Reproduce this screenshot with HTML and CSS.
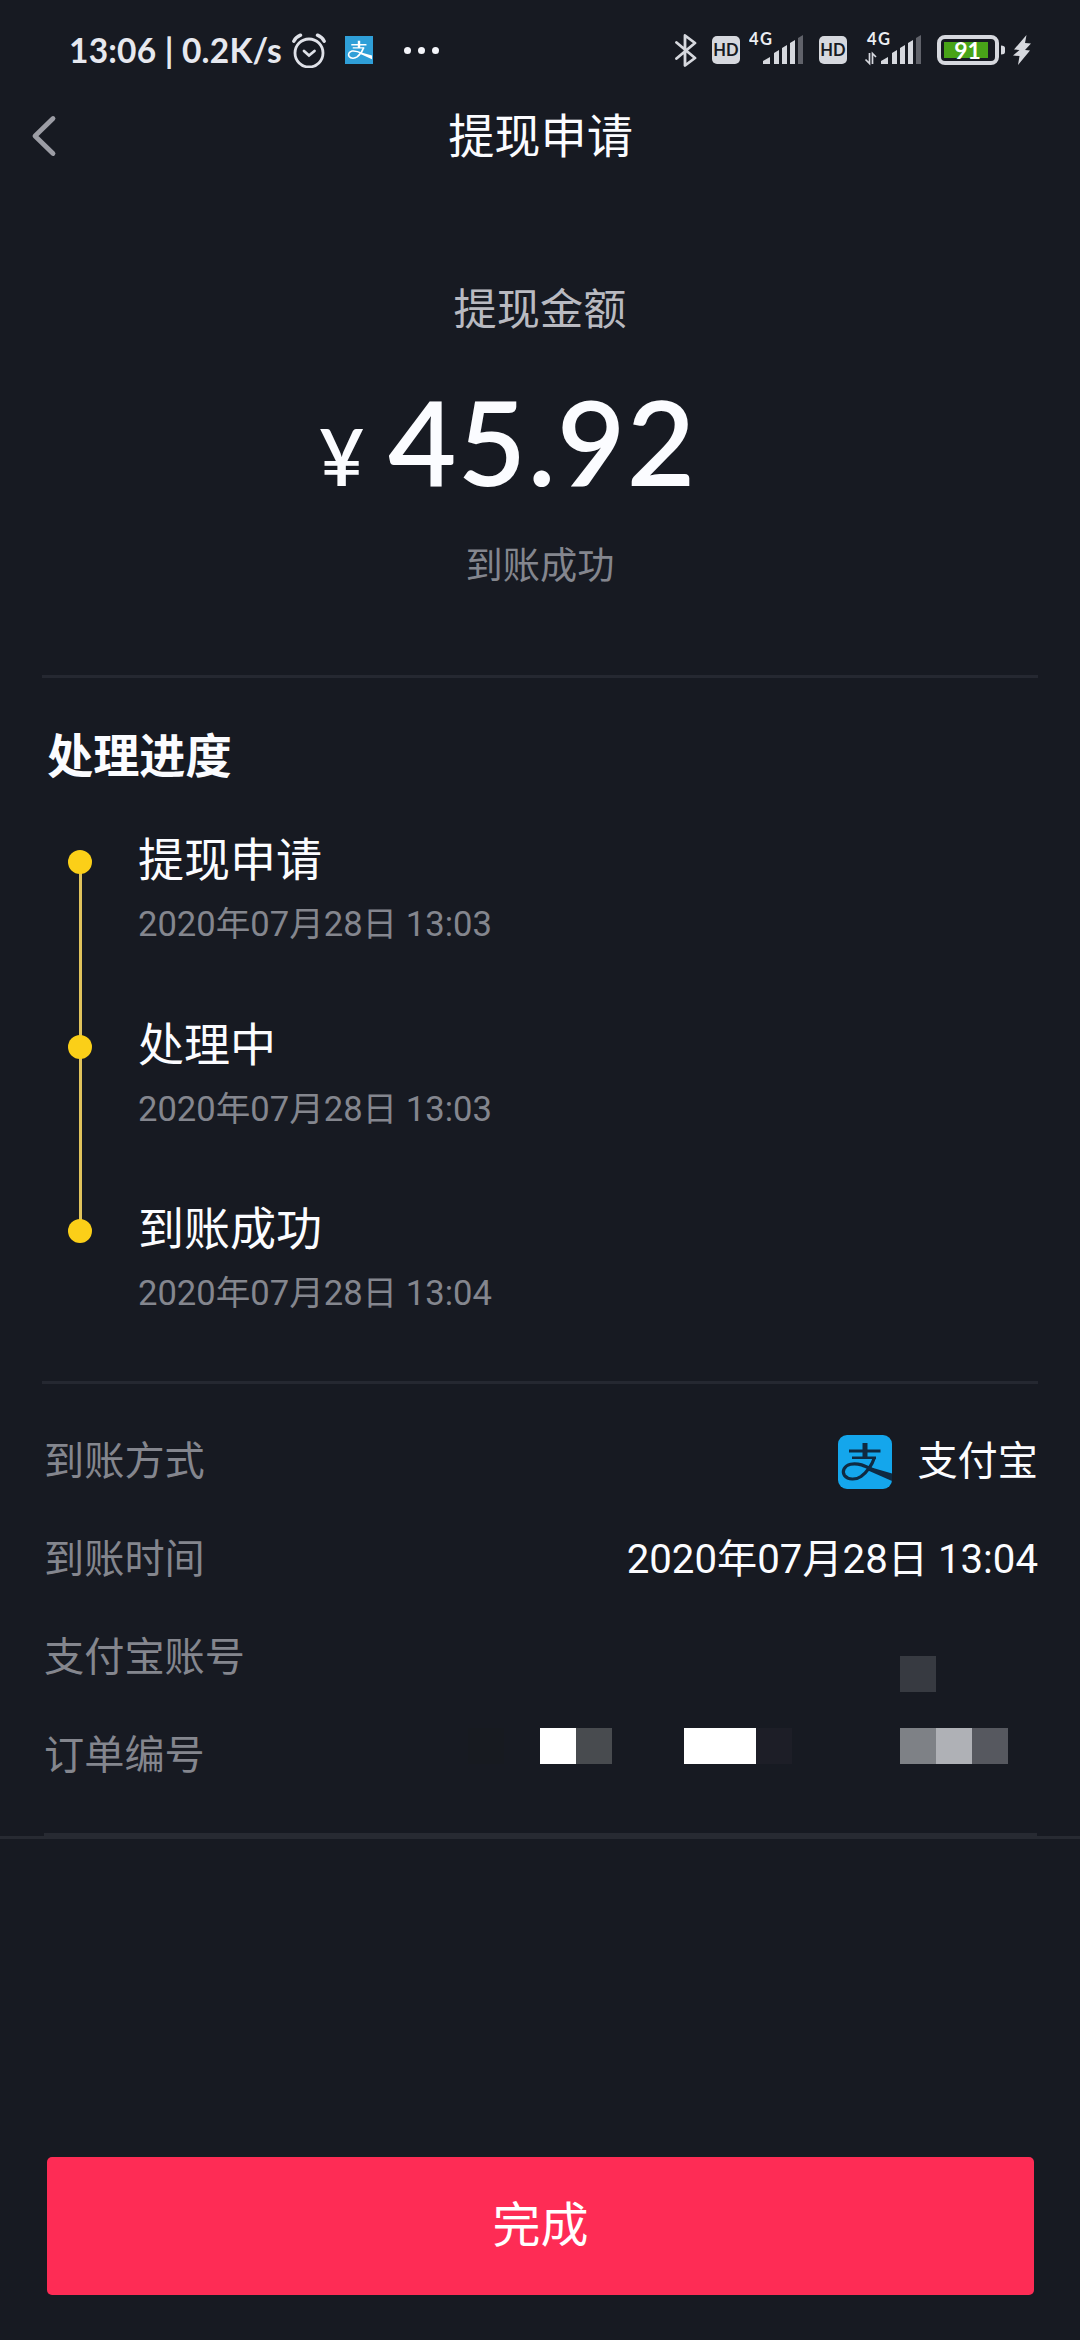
FILE: index.html
```html
<!DOCTYPE html>
<html lang="zh-CN">
<head>
<meta charset="utf-8">
<title>提现申请</title>
<link rel="stylesheet" href="styles.css">
</head>
<body>
<div class="screen">
  <svg class="defs" width="0" height="0">
    <defs>
      <symbol id="zhi" viewBox="0 0 54 54">
        <path d="M11 14.500h31.500v3H11zM24.500 8h5v16h-5zM14 21.500h24V24H14z" fill="currentColor"/>
        <path d="M36.500 22.500C34 30 29 37 23 41.500c-5 3.500-13 3.500-16.500-1-3-4.500 0-10 6-11.300C21 27.500 28 31.500 35 35" fill="none" stroke="currentColor" stroke-width="3.200"/>
        <path d="M30 31.500l24 7v7.500L29 35z" fill="currentColor"/>
      </symbol>
    </defs>
  </svg>

  <header class="status">
    <span class="clock">13:06 | 0.2K/s</span>
    <svg class="alarm" width="34" height="35" viewBox="0 0 34 35" fill="none" stroke="#dfe1e8" stroke-linecap="round">
      <circle cx="17" cy="20" r="14" stroke-width="2.800"/>
      <path d="M1.800 8.200Q4 4 8.500 2.200M32.200 8.200Q30 4 25.500 2.200" stroke-width="3.400"/>
      <path d="M12 18l5 4.500 5.500-4.500" stroke-width="2.800"/>
    </svg>
    <span class="app"><svg width="26" height="26"><use href="#zhi"/></svg></span>
    <span class="more"><i></i><i></i><i></i></span>
    <span class="grow"></span>
    <svg class="bt" width="22" height="35" viewBox="0 0 22 35" fill="none" stroke="#d6d8de" stroke-width="2.800" stroke-linejoin="round" stroke-linecap="round">
      <path d="M1.500 9.500L20 25 10 32.500V2.500L20 10 1.500 25.500"/>
    </svg>
    <span class="hd">HD</span>
    <svg class="sig1" width="54" height="44" viewBox="0 -5 54 44">
      <text x="0" y="12" class="net" textLength="23">4G</text>
      <path d="M14 31v-3l7-4v7zM25 31V20l5-3v14zM33 31V15l5-3v19zM41 31V10l5-3v24z" fill="#d6d8de"/>
      <path d="M49 31V5l5-3v29z" fill="#60626a"/>
    </svg>
    <span class="hd hd2">HD</span>
    <svg class="sig2" width="57" height="44" viewBox="-3 -5 57 44">
      <text x="0" y="12" class="net" textLength="23">4G</text>
      <path d="M2.500 20v10.500L-1.500 26.500M5.500 31V20.500L9 24" fill="none" stroke="#d6d8de" stroke-width="1.700"/>
      <path d="M14 31v-3l7-4v7zM25 31V20l5-3v14zM33 31V15l5-3v19zM41 31V10l5-3v24z" fill="#d6d8de"/>
      <path d="M49 31V5l5-3v29z" fill="#60626a"/>
    </svg>
    <svg class="bat" width="69" height="30" viewBox="0 0 69 30">
      <rect x="2" y="2" width="58" height="26" rx="6" fill="none" stroke="#d6d8de" stroke-width="4"/>
      <rect x="7" y="7" width="44" height="16" fill="#48a318"/>
      <path d="M64 10.500q4 0 4 2.500v4q0 2.500-4 2.500z" fill="#d6d8de"/>
      <text x="30.500" y="23.500" class="pct" text-anchor="middle">91</text>
    </svg>
    <svg class="bolt" width="18" height="30" viewBox="0 0 18 30">
      <path d="M13.500 0L1 14.500l5.500.5L0 20.500l6.500.5L5 30 17 15.500l-5-.5 6-6.500-6-.5z" fill="#d6d8de"/>
    </svg>
  </header>

  <nav class="bar">
    <svg class="back" width="26" height="42" viewBox="0 0 26 42"><path d="M22 3.500L4 21l18 17.500" fill="none" stroke="#9c9da5" stroke-width="4.800" stroke-linecap="round" stroke-linejoin="round"/></svg>
    <h1>提现申请</h1>
  </nav>

  <section class="summary">
    <p class="label">提现金额</p>
    <p class="amount"><span class="yen">¥</span><span class="num">45.92</span></p>
    <p class="state">到账成功</p>
  </section>

  <section class="progress">
    <h2>处理进度</h2>
    <ol>
      <li><b>提现申请</b><time>2020年07月28日 13:03</time></li>
      <li><b>处理中</b><time>2020年07月28日 13:03</time></li>
      <li><b>到账成功</b><time>2020年07月28日 13:04</time></li>
    </ol>
  </section>

  <section class="details">
    <div class="row"><span>到账方式</span><span class="val"><span class="alipay"><svg width="54" height="54"><use href="#zhi"/></svg></span>支付宝</span></div>
    <div class="row"><span>到账时间</span><span class="val">2020年07月28日 13:04</span></div>
    <div class="row"><span>支付宝账号</span><span class="mosaic account"><i class="m1"></i></span></div>
    <div class="row"><span>订单编号</span><span class="mosaic order"><i class="m0"></i><i></i><i class="m3"></i><i class="m2"></i><i></i><i></i><i class="m3"></i><i class="m3"></i><i class="m4"></i><i></i><i></i><i></i><i class="m5"></i><i class="m6"></i><i class="m7"></i></span></div>
  </section>
  <div class="end"><div></div></div>

  <button class="done">完成</button>
</div>
</body>
</html>
```

FILE: styles.css
```css
* { box-sizing: border-box; margin: 0; padding: 0; }

body {
  background: #171a22;
  color: #fbfcff;
  font-family: Roboto, "Noto Sans CJK SC", sans-serif;
}

.screen {
  width: 1080px;
  height: 2340px;
  display: flex;
  flex-direction: column;
  overflow: hidden;
}

.defs { position: absolute; }
svg { display: block; flex: none; }

/* status bar */
.status {
  height: 100px;
  flex: none;
  display: flex;
  align-items: center;
  padding: 0 49px 0 69px;
}
.clock {
  width: 223px;
  font: 700 33.500px/40px Lato, sans-serif;
  letter-spacing: 0.200px;
  color: #e6e8ef;
  white-space: pre;
}
.app {
  width: 28px;
  height: 28px;
  margin-left: 19px;
  padding: 1px;
  background: #2f9fd8;
  color: #fff;
}
.more { display: flex; gap: 7px; margin-left: 31px; }
.more i { width: 7px; height: 7px; border-radius: 50%; background: #f4f5fa; }
.grow { flex: 1; }
.hd {
  width: 28px;
  height: 28px;
  margin-left: 15px;
  border-radius: 5px;
  background: #d6d8de;
  color: #171a22;
  font: 700 16.500px/29px Lato, sans-serif;
  text-align: center;
}
.hd2 { margin-left: 16px; }
.sig1 { margin-left: 9px; }
.sig2 { margin-left: 17px; }
.net { font: 700 16.500px Lato, sans-serif; fill: #eceef3; }
.bat { margin-left: 16px; }
.pct { font: 700 23px Lato, sans-serif; fill: #fff; }
.bolt { margin-left: 7px; }

/* title bar */
.bar {
  height: 72px;
  flex: none;
  display: grid;
  grid-template-columns: 80px 1fr 80px;
  align-items: center;
}
.back { margin-left: 31px; }
.bar h1 { padding: 2px 0 0 1px; font-size: 46.200px; line-height: 60px; font-weight: 400; text-align: center; }

/* amount */
.summary {
  height: 503px;
  flex: none;
  padding-top: 109px;
  text-align: center;
}
.label { font-size: 43.200px; line-height: 60px; color: #b9bac1; }
.amount {
  display: flex;
  align-items: baseline;
  height: 150px;
  margin-top: 29px;
  padding-left: 319px;
  font-family: Lato, sans-serif;
  font-weight: 600;
  line-height: 142px;
}
.yen { width: 69px; font-size: 78px; text-align: left; }
.num { font-size: 118px; letter-spacing: 1.400px; }
.state { margin-top: 21px; font-size: 37.200px; line-height: 50px; color: #84868e; }

/* progress */
.progress {
  height: 706px;
  flex: none;
  margin: 0 42px;
  padding: 49px 0 0 5px;
  border-top: 3px solid #252831;
}
h2 { font-size: 46.200px; line-height: 60px; font-weight: 700; }
ol { list-style: none; margin-top: 43px; }
li {
  position: relative;
  height: 184.500px;
  padding-left: 91px;
}
li::before {
  content: "";
  position: absolute;
  left: 21px;
  top: 20px;
  width: 24px;
  height: 24px;
  border-radius: 50%;
  background: #fbcf18;
  z-index: 1;
}
li:not(:last-child)::after {
  content: "";
  position: absolute;
  left: 32px;
  top: 33px;
  width: 3px;
  height: 184px;
  background: #e0c35c;
}
li b { display: block; font-size: 46px; line-height: 60px; font-weight: 400; }
time { display: block; margin-top: 9px; font-size: 34.600px; line-height: 50px; color: #84868e; }

/* details */
.details {
  height: 452px;
  flex: none;
  margin: 0 42px;
  padding: 24px 0 0 2px;
  border-top: 3px solid #252831;
  font-size: 40.200px;
}
.row {
  height: 98px;
  display: flex;
  align-items: center;
  justify-content: space-between;
  color: #84868e;
}
.val { display: flex; align-items: center; color: #fbfcff; }
.alipay {
  width: 54px;
  height: 54px;
  margin: 10px 25px 0 0;
  border-radius: 9px;
  overflow: hidden;
  background: #14a6ec;
  color: #0f2a42;
}
.mosaic {
  display: grid;
  grid-auto-flow: column;
  grid-auto-columns: 36px;
  height: 36px;
  align-self: flex-start;
}
.account { margin: 52px 102px 0 0; }
.order { margin: 26px 30px 0 0; }
.m0 { background: #171a20; }
.m1 { background: #373a41; }
.m2 { background: #484b4f; }
.m3 { background: #fff; }
.m4 { background: #1d1e27; }
.m5 { background: #7e8186; }
.m6 { background: #afb1b6; }
.m7 { background: #56585f; }

.end {
  height: 6px;
  flex: none;
  background: linear-gradient(transparent 3px, #272a32 3px);
}
.end div { height: 6px; margin: 0 43px 0 44px; background: #272a32; }

.done {
  height: 138px;
  flex: none;
  margin: 318px 46px 0 47px;
  border: 0;
  border-radius: 5px;
  background: #fe2c55;
  color: #fff;
  font: 400 48px/60px Roboto, "Noto Sans CJK SC", sans-serif;
}
```
